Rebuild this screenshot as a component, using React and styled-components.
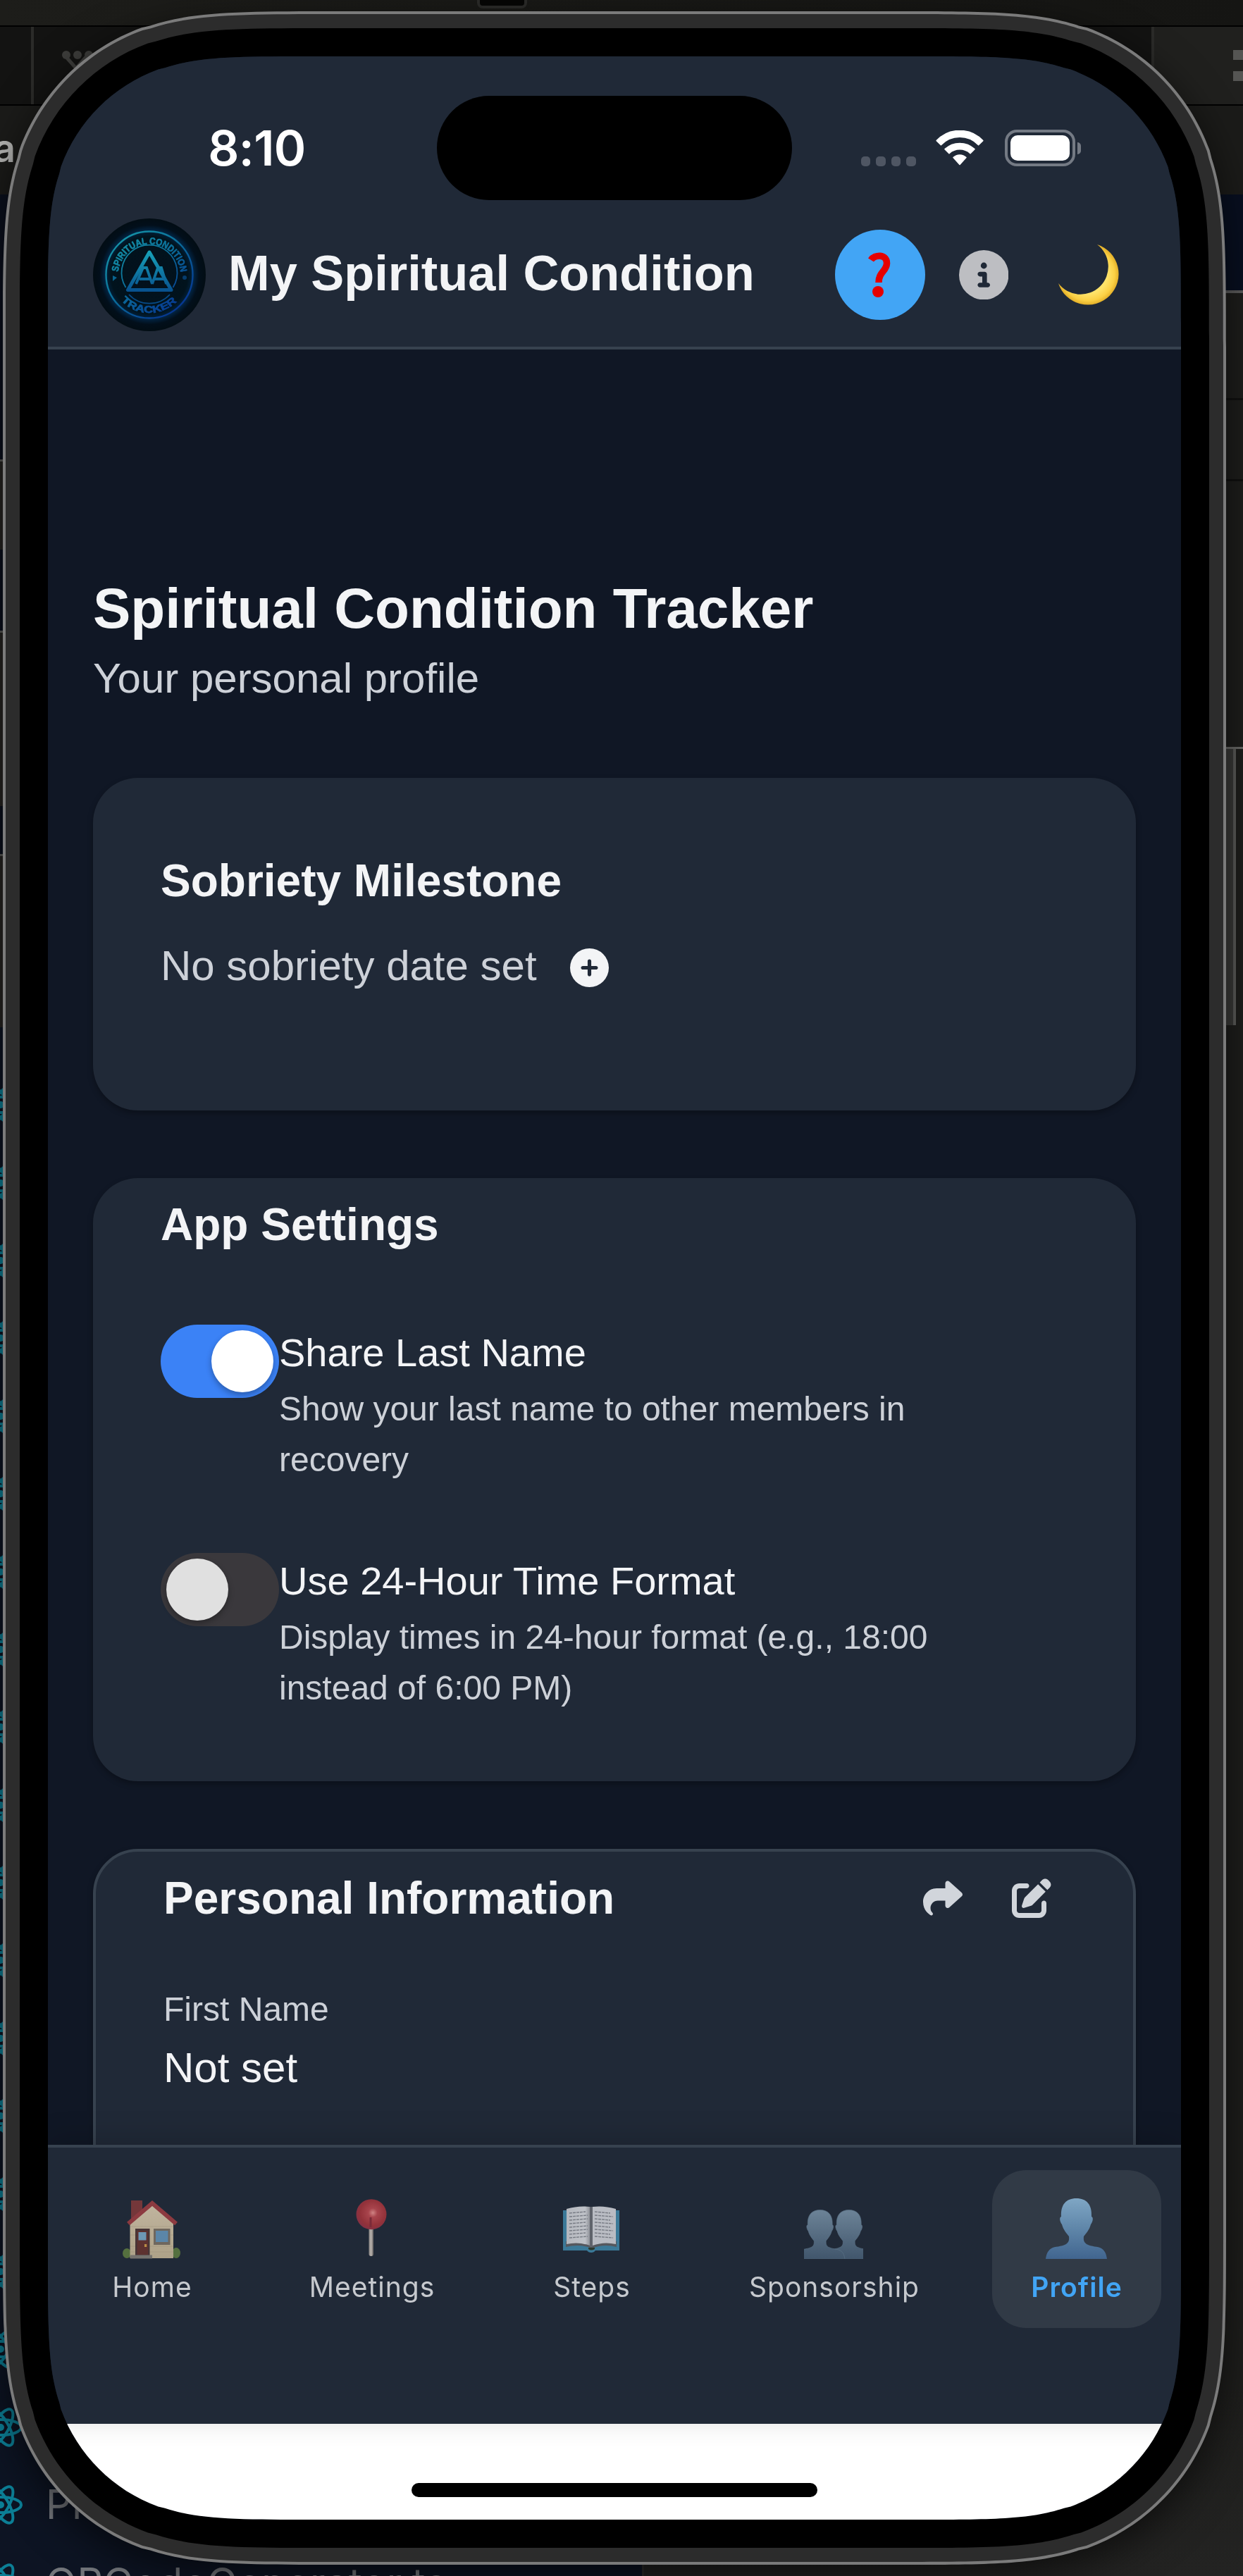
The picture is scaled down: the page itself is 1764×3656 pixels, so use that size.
import React from "react";
import styled, { createGlobalStyle, css } from "styled-components";
import { FaShare, FaPenToSquare, FaCircleInfo, FaCirclePlus } from "react-icons/fa6";

const sans = `"Liberation Sans", Arial, Helvetica, sans-serif`;
const system = `Inter, "Liberation Sans", sans-serif`;

const color = {
  page: "#101725",
  surface: "#202937",
  line: "#37424f",
  text: "#f3f4f6",
  muted: "#cdd1d8",
  accent: "#42a5f5",
  toggle: "#3b82f6",
};

/* Continuous-curvature rounded rectangle, as used by the device outline. */
const squircle = (w, h, r) => {
  const a = 1.52866 * r, b = 1.08849 * r, c = 0.86841 * r, d = 0.66993 * r;
  const e = 0.0655 * r, f = 0.63149 * r, g = 0.07491 * r, i = 0.37282 * r, j = 0.16906 * r;
  const n = (v) => Math.round(v * 100) / 100;
  const p = (...pts) => pts.map(n).join(" ");
  return `M${p(a, 0)} L${p(w - a, 0)} C${p(w - b, 0, w - c, 0, w - d, e)} L${p(w - f, g)} C${p(w - i, j, w - j, i, w - g, f)} L${p(w - e, d)} C${p(w, c, w, b, w, a)} L${p(w, h - a)} C${p(w, h - b, w, h - c, w - e, h - d)} L${p(w - g, h - f)} C${p(w - j, h - i, w - i, h - j, w - f, h - g)} L${p(w - d, h - e)} C${p(w - c, h, w - b, h, w - a, h)} L${p(a, h)} C${p(b, h, c, h, d, h - e)} L${p(f, h - g)} C${p(i, h - j, j, h - i, g, h - f)} L${p(e, h - d)} C${p(0, h - c, 0, h - b, 0, h - a)} L${p(0, a)} C${p(0, b, 0, c, e, d)} L${p(g, f)} C${p(j, i, i, j, f, g)} L${p(d, e)} C${p(c, 0, b, 0, a, 0)} Z`;
};

const GlobalStyle = createGlobalStyle`
  * { box-sizing: border-box; }
  html, body { margin: 0; padding: 0; background: #1e1e1c; }
  h1, h2, p { margin: 0; font-weight: 400; }
  svg { display: block; }
  button { border: 0; padding: 0; background: none; font: inherit; color: inherit; }
`;

const Desktop = styled.div`
  position: relative;
  width: 1764px;
  height: 3656px;
  overflow: hidden;
  background: #1d1d1b;
  font-family: ${sans};
`;

/* ---------- editor window behind the device ---------- */

const Backdrop = styled.div`
  position: absolute;
  inset: 0;
  display: flex;
  flex-direction: column;
`;

const WindowTop = styled.div`
  flex: none;
  height: 38px;
  display: flex;
  padding-left: 677px;
  background: linear-gradient(90deg, #1d1d1a, #151513);
  border-bottom: 2px solid #000;
`;

const Notch = styled.div`
  width: 71px;
  height: 12px;
  background: #060605;
  border: 4px solid #2c2c2a;
  border-top: 0;
  border-radius: 0 0 8px 8px;
`;

const ToolStrip = styled.div`
  flex: none;
  height: 112px;
  display: flex;
  align-items: stretch;
  background: #131312;
  border-bottom: 2px solid #000;
`;

const ToolCell = styled.div`
  width: ${(p) => p.$w}px;
  display: flex;
  align-items: center;
  padding-left: ${(p) => p.$pad || 0}px;
  background: ${(p) => p.$bg || "transparent"};
  border-right: ${(p) => (p.$last ? 0 : 4)}px solid #2b2b29;
`;

const Squares = styled.div`
  display: grid;
  gap: 16px;
  i {
    width: 16px;
    height: 14px;
    background: #555553;
  }
`;

const TabStrip = styled.div`
  flex: none;
  height: 126px;
  overflow: hidden;
  background: #1b1b19;
  color: #b4b4b2;
  font: 600 54px/122px ${system};
  text-indent: -9px;
`;

const EditorArea = styled.div`
  flex: 1;
  min-height: 0;
  display: grid;
  grid-template-columns: 914px 1fr;
`;

const Sidebar = styled.div`
  display: flex;
  flex-direction: column;
  overflow: hidden;
  border-right: 3px solid #2b2b29;
`;

const SideBlock = styled.div`
  flex: none;
  height: ${(p) => p.$h}px;
  background: ${(p) => (p.$panel ? "#262422" : "#0b101d")};
  border-top: ${(p) => (p.$panel ? "3px solid #5a5a58" : "0")};
`;

const FileList = styled.ul`
  flex: 1;
  margin: 0;
  padding: 55px 0 0;
  list-style: none;
  background: #0d1423;
`;

const FileRow = styled.li`
  height: 110.4px;
  display: flex;
  align-items: center;
  gap: 33px;
  margin-left: -30px;
  color: #73767b;
  font: 400 57px/66px ${system};
  letter-spacing: 0.8px;
  white-space: nowrap;
`;

const EditorRight = styled.div`
  display: flex;
  flex-direction: column;
  background: linear-gradient(180deg, #1e1e1c 0%, #1e1e1c 92%, #232322 100%);
`;

const EditorHead = styled.div`
  flex: none;
  height: 140px;
  background: #080f20;
  border-bottom: 4px solid #5c5c5c;
`;

const EditorRule = styled.div`
  flex: none;
  height: ${(p) => p.$h}px;
  border-bottom: 3px solid ${(p) => p.$c};
`;

const ScrollTrack = styled.div`
  flex: none;
  height: 392px;
  margin-left: 826px;
  width: 14px;
  background: #3a3a38;
  border-right: 4px solid #5c5c5a;
`;

/* ---------- device ---------- */

const Device = styled.main`
  position: relative;
  width: 1736px;
  margin: 0 0 0 4px;
  padding-top: 16px;
  filter: drop-shadow(0 16px 28px rgba(0, 0, 0, 0.6));
`;

const shell = (w, h, r) => css`
  width: ${w}px;
  height: ${h}px;
  clip-path: path("${squircle(w, h, r)}");
`;

const Rim = styled.div`
  ${shell(1736, 3624, 312)}
  padding: 4px;
  background: #7b7b7b;
`;

const Band = styled.div`
  ${shell(1728, 3616, 308)}
  padding: 20px;
  background: #2c2c2c;
`;

const Bezel = styled.div`
  ${shell(1688, 3576, 288)}
  padding: 40px;
  background: #000;
`;

const Screen = styled.div`
  ${shell(1608, 3496, 248)}
  display: flex;
  flex-direction: column;
  background: ${color.page};
`;

/* ---------- status bar and header ---------- */

const StatusBar = styled.div`
  flex: none;
  height: 220px;
  padding-top: 40px;
  display: grid;
  grid-template-columns: 552px 504px 552px;
  align-items: center;
  background: ${color.surface};
`;

const Clock = styled.time`
  padding-left: 41px;
  text-align: center;
  color: #fff;
  font: 600 69px/80px ${system};
  letter-spacing: -0.6px;
`;

const Island = styled.div`
  height: 148px;
  border-radius: 74px;
  background: #000;
`;

const Indicators = styled.div`
  display: flex;
  align-items: center;
  padding-left: 98px;
`;

const SignalDots = styled.div`
  display: flex;
  gap: 8px;
  margin: 37px 28px 0 0;
  i {
    width: 13.4px;
    height: 14px;
    border-radius: 5px;
    background: #4f5663;
  }
`;

const Battery = styled.div`
  width: 100px;
  height: 52px;
  margin: 0 3px 0 30px;
  padding: 4px;
  border: 4px solid #747a84;
  border-radius: 17px;
  &::before {
    content: "";
    display: block;
    height: 100%;
    border-radius: 10px;
    background: #fff;
  }
`;

const BatteryTip = styled.div`
  width: 5px;
  height: 17px;
  border-radius: 0 5px 5px 0;
  background: #747a84;
`;

const Header = styled.header`
  flex: none;
  height: 196px;
  padding: 0 88px 12px 64px;
  display: flex;
  align-items: center;
  background: ${color.surface};
  border-bottom: 4px solid ${color.line};
`;

const HeaderTitle = styled.p`
  margin: -5px auto 0 32px;
  color: ${color.text};
  font: 700 70.4px/84px ${sans};
  white-space: nowrap;
`;

const HelpButton = styled.button`
  width: 128px;
  height: 128px;
  display: grid;
  place-items: center;
  border-radius: 50%;
  background: ${color.accent};
`;

const InfoButton = styled.button`
  margin: 0 71px 0 48px;
  color: #bdbec2;
`;

/* ---------- content ---------- */

const Content = styled.section`
  flex: none;
  height: 2548px;
  padding: 320px 64px 0;
  overflow: hidden;
  display: flex;
  flex-direction: column;
`;

const PageTitle = styled.h1`
  color: ${color.text};
  font: 700 80px/96px ${sans};
`;

const PageSubtitle = styled.p`
  margin: 6px 0 96px;
  color: ${color.muted};
  font: 400 60px/90px ${sans};
`;

const Card = styled.section`
  flex: none;
  height: ${(p) => p.$h}px;
  margin-bottom: 96px;
  padding: ${(p) => p.$top}px 96px 0;
  background: ${color.surface};
  border: ${(p) => (p.$outlined ? `4px solid ${color.line}` : "0")};
  border-radius: 64px;
  box-shadow: 0 4px 8px rgba(0, 0, 0, 0.3);
`;

const CardTitle = styled.h2`
  color: ${color.text};
  font: 700 64px/72px ${sans};
`;

const MilestoneRow = styled.div`
  display: flex;
  align-items: center;
  gap: 47px;
  margin-top: 40px;
  color: ${color.muted};
  font: 400 60px/90px ${sans};
  svg {
    color: ${color.text};
    margin-top: 5px;
  }
`;

const SettingList = styled.div`
  display: flex;
  flex-direction: column;
  gap: 96px;
  margin-top: 106px;
`;

const SettingRow = styled.div`
  display: flex;
  align-items: flex-start;
`;

const Toggle = styled.button`
  flex: none;
  width: 168px;
  height: 104px;
  padding: 8px;
  display: flex;
  justify-content: ${(p) => (p.$on ? "flex-end" : "flex-start")};
  border-radius: 52px;
  background: ${(p) => (p.$on ? color.toggle : "#3a383c")};
  &::before {
    content: "";
    width: 88px;
    height: 88px;
    border-radius: 50%;
    background: ${(p) => (p.$on ? "#fff" : "#e0e0e0")};
    box-shadow: 0 4px 8px rgba(0, 0, 0, 0.3);
  }
`;

const SettingText = styled.div`
  width: 960px;
  margin-top: -2px;
`;

const SettingLabel = styled.p`
  color: ${color.text};
  font: 400 56px/84px ${sans};
`;

const SettingHint = styled.p`
  margin-top: 2px;
  color: ${color.muted};
  font: 400 48px/72px ${sans};
`;

const CardHead = styled.div`
  display: flex;
  align-items: center;
  gap: 70px;
  padding-right: 20px;
  color: #d1d5db;
  ${CardTitle} {
    margin-right: auto;
  }
`;

const FieldLabel = styled.p`
  margin-top: 86px;
  color: ${color.muted};
  font: 400 48px/72px ${sans};
`;

const FieldValue = styled.p`
  margin-top: 2px;
  color: ${color.text};
  font: 400 60px/90px ${sans};
`;

/* ---------- tab bar ---------- */

const TabBar = styled.nav`
  flex: none;
  position: relative;
  height: 396px;
  padding-top: 32px;
  display: grid;
  grid-template-columns: 296px 328px 296px 392px 296px;
  align-items: start;
  justify-items: center;
  background: ${color.surface};
  border-top: 4px solid ${color.line};
  box-shadow: 0 -8px 40px rgba(0, 0, 0, 0.16);
`;

const Tab = styled.a`
  width: ${(p) => (p.$wide ? 304 : 240)}px;
  height: 224px;
  padding-top: 40px;
  display: flex;
  flex-direction: column;
  align-items: center;
  border-radius: 48px;
  background: ${(p) => (p.$active ? "#313a46" : "transparent")};
  color: ${(p) => (p.$active ? color.accent : "#c6c9ce")};
  font: ${(p) => (p.$active ? 600 : 400)} 39px/48px ${system};
  letter-spacing: 1px;
`;

const TabIcon = styled.span`
  height: 88px;
  margin-bottom: 14px;
  padding-bottom: 2px;
  display: flex;
  align-items: flex-end;
  svg {
    margin: 0 2px ${(p) => p.$lift || 0}px 0;
  }
`;

const HomeArea = styled.footer`
  flex: 1;
  display: flex;
  justify-content: center;
  padding-top: 84px;
  background: #fff;
`;

const HomeIndicator = styled.div`
  width: 576px;
  height: 20px;
  border-radius: 10px;
  background: #000;
`;

/* ---------- drawings ---------- */

const AtomIcon = () => (
  <svg width="62" height="56" viewBox="-31 -28 62 56" fill="none" stroke="#0c7f96" strokeWidth="4">
    {[0, 60, 120].map((a) => (
      <ellipse key={a} rx="29" ry="11" transform={`rotate(${a})`} />
    ))}
    <circle r="5" fill="#0c7f96" stroke="none" />
  </svg>
);

const BranchIcon = () => (
  <svg width="60" height="44" viewBox="0 0 60 44" fill="none" stroke="#3d3d3b" strokeWidth="5">
    <path d="M6 10 L20 26 L34 10 M20 26 V40" />
    <g fill="#3d3d3b" stroke="none">
      <circle cx="6" cy="7" r="6" /><circle cx="22" cy="7" r="6" /><circle cx="38" cy="7" r="6" />
    </g>
  </svg>
);

const WifiIcon = () => (
  <svg width="68" height="50" viewBox="0 0 68 50" fill="#fff" stroke="#fff" strokeWidth="1.5" strokeLinejoin="round">
    <path d="M1.2 14.6 A45 45 0 0 1 66.8 14.6 L60.6 20.8 A36.5 36.5 0 0 0 7.4 20.8 Z" />
    <path d="M13 26.6 A31 31 0 0 1 55 26.6 L49 32.6 A22.5 22.5 0 0 0 19 32.6 Z" />
    <path d="M25 38.6 A13 13 0 0 1 43 38.6 L34 48.4 Z" />
  </svg>
);

const BrandLogo = () => (
  <svg width="160" height="160" viewBox="0 0 160 160" fill="none">
    <defs>
      <linearGradient id="brand" x1="20" y1="20" x2="125" y2="140" gradientUnits="userSpaceOnUse">
        <stop offset="0" stopColor="#189fab" />
        <stop offset="0.5" stopColor="#0a6c9a" />
        <stop offset="1" stopColor="#052c90" />
      </linearGradient>
      <linearGradient id="brandMark" x1="80" y1="44" x2="80" y2="106" gradientUnits="userSpaceOnUse">
        <stop offset="0" stopColor="#18a5ba" />
        <stop offset="1" stopColor="#074d8c" />
      </linearGradient>
      <radialGradient id="brandGlow" cx="80" cy="80" r="80" gradientUnits="userSpaceOnUse">
        <stop offset="0" stopColor="#03101c" />
        <stop offset="0.68" stopColor="#01131d" />
        <stop offset="0.79" stopColor="#022341" />
        <stop offset="0.88" stopColor="#020f1b" />
        <stop offset="1" stopColor="#020d14" />
      </radialGradient>
      <path id="brandTop" d="M35.5 81 A44.5 44.5 0 0 1 124.5 81" />
      <path id="brandBottom" d="M36 112 A55 55 0 0 0 124 112" />
    </defs>
    <circle cx="80" cy="80" r="80" fill="url(#brandGlow)" />
    <circle cx="80" cy="80" r="61.5" stroke="url(#brand)" strokeWidth="2.4" />
    <path d="M46.5 98 A39.5 39.5 0 1 1 113.5 98" stroke="url(#brand)" strokeWidth="1.8" />
    <path d="M51 108 A39.5 39.5 0 0 0 109 108" stroke="#064a86" strokeWidth="1.8" />
    <path d="M80 48 L49.5 101.5 H111 Z" stroke="url(#brandMark)" strokeWidth="5" strokeLinejoin="round" />
    <path d="M61 93 L71 70 H76 L84 93 M66 86 H80 M84 93 L92 70 H97 L104 93 M86 86 H100" stroke="url(#brandMark)" strokeWidth="3.8" />
    <g fill="url(#brand)" stroke="url(#brand)" strokeWidth="0.7" fontFamily="Liberation Sans, sans-serif" fontWeight="700">
      <text fontSize="13.5">
        <textPath href="#brandTop" startOffset="5" textLength="130" lengthAdjust="spacingAndGlyphs">SPIRITUAL CONDITION</textPath>
      </text>
      <text fontSize="14">
        <textPath href="#brandBottom" startOffset="6" textLength="88" lengthAdjust="spacingAndGlyphs">TRACKER</textPath>
      </text>
    </g>
    <path d="M28 81 V89 L34 84 Z" fill="#08638f" />
    <circle cx="130" cy="84" r="3" fill="#053c6d" />
  </svg>
);

const QuestionIcon = () => (
  <svg width="34" height="66" viewBox="0 0 34 66" fill="none" aria-label="Help">
    <path d="M4 12 C9 4 27 3 26.5 17 C26 28 15 29 15 44" stroke="#e60000" strokeWidth="9.5" />
    <circle cx="14" cy="57" r="8" fill="#e60000" />
  </svg>
);

const MoonIcon = () => (
  <svg width="86" height="86" viewBox="0 0 86 86">
    <defs>
      <radialGradient id="moon" cx="42" cy="42" r="46" gradientUnits="userSpaceOnUse">
        <stop offset="0.6" stopColor="#ffe36a" />
        <stop offset="0.82" stopColor="#fbd044" />
        <stop offset="1" stopColor="#d9a21e" />
      </radialGradient>
    </defs>
    <path d="M55 0 A43.8 43.8 0 1 1 0 55 A39.3 39.3 0 1 0 55 0 Z" fill="url(#moon)" />
  </svg>
);

const HouseIcon = () => (
  <svg width="82" height="84" viewBox="0 0 82 84">
    <defs>
      <linearGradient id="wall" x1="0" y1="0" x2="0" y2="1">
        <stop offset="0" stopColor="#c0b49e" />
        <stop offset="1" stopColor="#aea288" />
      </linearGradient>
    </defs>
    <rect x="12" y="1" width="16" height="30" fill="#74373a" />
    <ellipse cx="6" cy="76" rx="6" ry="7" fill="#55703f" />
    <ellipse cx="76" cy="75.5" rx="6" ry="7.5" fill="#55703f" />
    <path d="M10.5 83 V32 L42 7 L72 32 V83 Z" fill="url(#wall)" />
    <path d="M11 38 H72 M11 66 H72 M11 74 H72 M11 50 H18 M68 50 H72" stroke="#9c917a" strokeWidth="0.8" opacity="0.6" />
    <path d="M8 34 L42 5 L76 34" fill="none" stroke="#8c3a40" strokeWidth="6" />
    <rect x="18" y="41" width="20.5" height="38" fill="#473536" />
    <rect x="20.5" y="44" width="15.5" height="34" fill="#5d3230" />
    <rect x="22.5" y="46" width="11" height="11.5" fill="#6d98b5" />
    <rect x="31" y="63" width="3.2" height="4" fill="#b98c45" />
    <rect x="44" y="41" width="23.5" height="23" fill="#6f675e" />
    <rect x="47" y="44" width="17.5" height="16" fill="#5b86a8" />
    <rect x="11" y="78.5" width="31" height="5" fill="#76736f" />
  </svg>
);

const PinIcon = () => (
  <svg width="44" height="81" viewBox="0 0 44 81">
    <defs>
      <radialGradient id="pin" cx="0.55" cy="0.45" r="0.6">
        <stop offset="0" stopColor="#d08484" />
        <stop offset="0.25" stopColor="#a8444c" />
        <stop offset="0.7" stopColor="#93323a" />
        <stop offset="1" stopColor="#823045" />
      </radialGradient>
      <linearGradient id="needle">
        <stop offset="0" stopColor="#8a8684" />
        <stop offset="0.5" stopColor="#b9b3ae" />
        <stop offset="1" stopColor="#5f5c5d" />
      </linearGradient>
    </defs>
    <rect x="18.5" y="38" width="6.5" height="43" rx="3" fill="url(#needle)" />
    <circle cx="22" cy="21.7" r="21.5" fill="url(#pin)" />
    <path d="M21 26 V40" stroke="#7a2a38" strokeWidth="3" />
  </svg>
);

const BookIcon = () => (
  <svg width="80" height="66" viewBox="0 0 80 66">
    <defs>
      <linearGradient id="page">
        <stop offset="0" stopColor="#b5b8be" />
        <stop offset="0.8" stopColor="#bfc2c8" />
        <stop offset="1" stopColor="#8f9299" />
      </linearGradient>
    </defs>
    <path d="M0 6 H80 V63 H46 Q44 66 40 66 Q36 66 34 63 H0 Z" fill="#3b7998" />
    <path d="M4 58 V50 H76 V58 Q58 53 41 60 Q24 53 4 58 Z" fill="#55585e" />
    <path d="M5 4 Q22 -1 38 1 V56 Q22 50 5 54 Z" fill="url(#page)" />
    <path d="M75 4 Q58 -1 42 1 V56 Q58 50 75 54 Z" fill="#b9bcc3" />
    <path d="M38 1 H42 V58 H38 Z" fill="#5f636b" />
    <g stroke="#777b84" strokeWidth="1.4" strokeDasharray="4 1">
      {[10, 15, 20, 25, 30, 35, 40, 45].map((y, i) => (
        <path key={y} d={`M9 ${y} L${i % 3 ? 35 : 32} ${y - 2} M45 ${y - 2} L${i % 2 ? 71 : 67} ${y}`} />
      ))}
    </g>
    <path d="M36 59 H45 V61 Q40 64 36 61 Z" fill="#2d3a2e" />
  </svg>
);

const bust =
  "M43.5 0 C29 0 21 9 22 26 C19 27 20 33 23 37 C25 45 30 50 33 54 C33.5 59 33 62 29 65 C22 69 13 68 8 71 C2 75 1 80 0 86 H87 C86 80 85 75 79 71 C74 68 65 69 58 65 C54 62 53.5 59 54 54 C57 50 62 45 64 37 C67 33 68 27 65 26 C66 9 58 0 43.5 0 Z";

const PeopleIcon = () => (
  <svg width="84" height="70" viewBox="0 0 84 70">
    <defs>
      <linearGradient id="people" x1="0" y1="0" x2="0" y2="1">
        <stop offset="0" stopColor="#6c8397" />
        <stop offset="1" stopColor="#41566c" />
      </linearGradient>
    </defs>
    <g fill="url(#people)" stroke="#5b7388" strokeWidth="0.8">
      <path d={bust} transform="translate(28.5 0.5) scale(0.81)" />
      <path d={bust} transform="translate(-12.5 0.5) scale(0.81)" />
    </g>
  </svg>
);

const PersonIcon = () => (
  <svg width="87" height="86" viewBox="0 0 87 86">
    <defs>
      <linearGradient id="person" x1="0" y1="0" x2="0" y2="1">
        <stop offset="0" stopColor="#7fa6c4" />
        <stop offset="0.5" stopColor="#5f86a9" />
        <stop offset="1" stopColor="#41658f" />
      </linearGradient>
    </defs>
    <path d={bust} fill="url(#person)" />
  </svg>
);

/* ---------- data ---------- */

const settings = [
  { label: "Share Last Name", hint: "Show your last name to other members in recovery", on: true },
  { label: "Use 24-Hour Time Format", hint: "Display times in 24-hour format (e.g., 18:00 instead of 6:00 PM)", on: false },
];

const tabs = [
  { label: "Home", Icon: HouseIcon },
  { label: "Meetings", Icon: PinIcon, lift: 4 },
  { label: "Steps", Icon: BookIcon, lift: 9 },
  { label: "Sponsorship", Icon: PeopleIcon, wide: true },
  { label: "Profile", Icon: PersonIcon, active: true },
];

const files = [...Array(18).fill(""), "Pr", "QRCodeGenerator.ts"];

const EditorBackdrop = () => (
  <Backdrop>
    <WindowTop><Notch /></WindowTop>
    <ToolStrip>
      <ToolCell $w={48} />
      <ToolCell $w={1590} $pad={40}><BranchIcon /></ToolCell>
      <ToolCell $w={126} $pad={112} $bg="#20201e" $last>
        <Squares><i /><i /></Squares>
      </ToolCell>
    </ToolStrip>
    <TabStrip>a</TabStrip>
    <EditorArea>
      <Sidebar>
        <SideBlock $h={376} />
        <SideBlock $h={128} $panel />
        <SideBlock $h={115} />
        <SideBlock $h={249} $panel />
        <SideBlock $h={68} />
        <SideBlock $h={246} $panel />
        <FileList>
          {files.map((name, i) => (
            <FileRow key={i}><AtomIcon />{name}</FileRow>
          ))}
        </FileList>
      </Sidebar>
      <EditorRight>
        <EditorHead />
        <EditorRule $h={152} $c="#111110" />
        <EditorRule $h={115} $c="#111110" />
        <EditorRule $h={380} $c="#6a6a68" />
        <ScrollTrack />
      </EditorRight>
    </EditorArea>
  </Backdrop>
);

export default function App() {
  return (
    <Desktop>
      <GlobalStyle />
      <EditorBackdrop />
      <Device>
        <Rim><Band><Bezel>
          <Screen>
            <StatusBar>
              <Clock>8:10</Clock>
              <Island />
              <Indicators>
                <SignalDots><i /><i /><i /><i /></SignalDots>
                <WifiIcon />
                <Battery />
                <BatteryTip />
              </Indicators>
            </StatusBar>

            <Header>
              <BrandLogo />
              <HeaderTitle>My Spiritual Condition</HeaderTitle>
              <HelpButton><QuestionIcon /></HelpButton>
              <InfoButton><FaCircleInfo size={70.4} /></InfoButton>
              <MoonIcon />
            </Header>

            <Content>
              <PageTitle>Spiritual Condition Tracker</PageTitle>
              <PageSubtitle>Your personal profile</PageSubtitle>

              <Card $h={472} $top={110}>
                <CardTitle>Sobriety Milestone</CardTitle>
                <MilestoneRow>
                  <span>No sobriety date set</span>
                  <FaCirclePlus size={55} />
                </MilestoneRow>
              </Card>

              <Card $h={856} $top={30}>
                <CardTitle>App Settings</CardTitle>
                <SettingList>
                  {settings.map((s) => (
                    <SettingRow key={s.label}>
                      <Toggle $on={s.on} />
                      <SettingText>
                        <SettingLabel>{s.label}</SettingLabel>
                        <SettingHint>{s.hint}</SettingHint>
                      </SettingText>
                    </SettingRow>
                  ))}
                </SettingList>
              </Card>

              <Card $h={600} $top={30} $outlined>
                <CardHead>
                  <CardTitle>Personal Information</CardTitle>
                  <FaShare size={56} />
                  <FaPenToSquare size={56} />
                </CardHead>
                <FieldLabel>First Name</FieldLabel>
                <FieldValue>Not set</FieldValue>
              </Card>
            </Content>

            <TabBar>
              {tabs.map(({ label, Icon, lift, wide, active }) => (
                <Tab key={label} $wide={wide} $active={active}>
                  <TabIcon $lift={lift}><Icon /></TabIcon>
                  {label}
                </Tab>
              ))}
            </TabBar>

            <HomeArea><HomeIndicator /></HomeArea>
          </Screen>
        </Bezel></Band></Rim>
      </Device>
    </Desktop>
  );
}
